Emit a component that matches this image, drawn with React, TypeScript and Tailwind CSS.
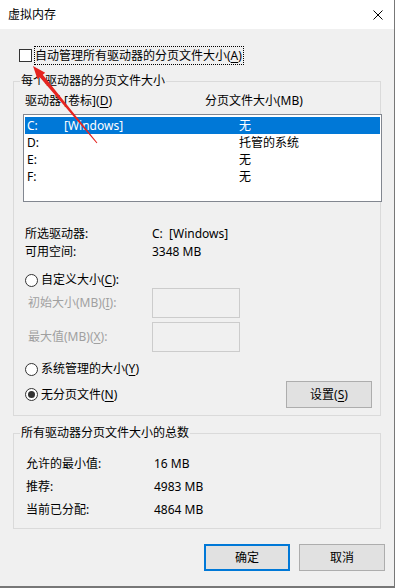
import React from 'react'

function Key({ k }: { k: string }) {
  return <span className="underline decoration-1 underline-offset-[2px]">{k}</span>
}

function Radio({ checked }: { checked?: boolean }) {
  return (
    <span className="flex h-[13px] w-[13px] shrink-0 items-center justify-center rounded-full border border-[#333333] bg-white">
      {checked && <span className="h-[7px] w-[7px] rounded-full bg-[#333333]" />}
    </span>
  )
}

const drives = [
  { id: 'C:', label: '[Windows]', size: '无', selected: true },
  { id: 'D:', label: '', size: '托管的系统', selected: false },
  { id: 'E:', label: '', size: '无', selected: false },
  { id: 'F:', label: '', size: '无', selected: false },
]

const totals = [
  { label: '允许的最小值:', value: '16 MB' },
  { label: '推荐:', value: '4983 MB' },
  { label: '当前已分配:', value: '4864 MB' },
]

export default function App() {
  return (
    <div className="relative flex h-[588px] w-[395px] flex-col border-r border-b-2 border-[#777777] bg-[#f0f0f0] font-['Noto_Sans','Noto_Sans_CJK_SC',sans-serif] text-[12px] leading-[16px] text-black">
      {/* title bar */}
      <div className="flex h-[29px] shrink-0 items-center justify-between bg-white pl-[8px] pr-[11px]">
        <span>虚拟内存</span>
        <svg width="10" height="10" viewBox="0 0 10 10">
          <path d="M0.5 0.5 L9.5 9.5 M9.5 0.5 L0.5 9.5" stroke="#000" strokeWidth="1" />
        </svg>
      </div>

      <div className="flex flex-1 flex-col px-[13px]">
        <div className="ml-[6px] mt-[17px] flex h-[19px] items-center">
          <span className="h-[13px] w-[13px] border border-[#333333] bg-white" />
          <span className="ml-[2px] flex h-[19px] items-center border border-dotted border-black pr-[1px]">
            自动管理所有驱动器的分页文件大小(<Key k="A" />)
          </span>
        </div>

        <fieldset className="mt-[8px] min-w-0 border border-[#dadada] pb-[7px]">
          <legend className="ml-[6px] px-[1px]">每个驱动器的分页文件大小</legend>
          <div className="flex flex-col pl-[9px]">
            <div className="mt-[4px] flex h-[16px] pl-[2px]">
              <span className="w-[180px]">
                驱动器 [卷标](<Key k="D" />)
              </span>
              <span>分页文件大小(MB)</span>
            </div>

            <div className="mt-[5px] h-[88px] w-[359px] border border-[#828790] bg-white px-[1px] pt-[2px]">
              {drives.map((d) => (
                <div
                  key={d.id}
                  className={
                    d.selected
                      ? 'flex h-[17px] items-center bg-[#0078d7] pl-[2px] text-white'
                      : 'flex h-[17px] items-center pl-[2px]'
                  }
                >
                  <span className="w-[37px]">{d.id}</span>
                  <span className="w-[175px]">{d.label}</span>
                  <span>{d.size}</span>
                </div>
              ))}
            </div>

            <div className="mt-[23px] flex h-[18px] items-center pl-[2px]">
              <span className="w-[127px]">所选驱动器:</span>
              <span className="whitespace-pre">C:  [Windows]</span>
            </div>
            <div className="flex h-[18px] items-center pl-[2px]">
              <span className="w-[127px]">可用空间:</span>
              <span>3348 MB</span>
            </div>

            <div className="mt-[11px] flex h-[16px] items-center pl-[2px]">
              <Radio />
              <span className="ml-[3px]">
                自定义大小(<Key k="C" />):
              </span>
            </div>
            <div className="flex h-[30px] items-center text-[#a0a0a0]">
              <span className="w-[129px] pl-[5px]">
                初始大小(MB)(<Key k="I" />):
              </span>
              <span className="h-[30px] w-[88px] border border-[#cccccc] bg-[#f0f0f0]" />
            </div>
            <div className="mt-[4px] flex h-[30px] items-center text-[#a0a0a0]">
              <span className="w-[129px] pl-[5px]">
                最大值(MB)(<Key k="X" />):
              </span>
              <span className="h-[30px] w-[88px] border border-[#cccccc] bg-[#f0f0f0]" />
            </div>

            <div className="mt-[9px] flex h-[16px] items-center pl-[2px]">
              <Radio />
              <span className="ml-[3px]">
                系统管理的大小(<Key k="Y" />)
              </span>
            </div>
            <div className="mt-[4px] flex h-[27px] items-center justify-between pl-[2px]">
              <div className="flex items-center">
                <Radio checked />
                <span className="ml-[3px]">
                  无分页文件(<Key k="N" />)
                </span>
              </div>
              <button className="mr-[8px] flex h-[27px] w-[86px] items-center justify-center border border-[#adadad] bg-[#e1e1e1]">
                设置(<Key k="S" />)
              </button>
            </div>
          </div>
        </fieldset>

        <fieldset className="mt-[9px] min-w-0 border border-[#dadada] pb-[7px]">
          <legend className="ml-[6px] px-[1px]">所有驱动器分页文件大小的总数</legend>
          <div className="mt-[11px] flex flex-col pl-[12px]">
            {totals.map((t) => (
              <div key={t.label} className="flex h-[23px] items-center">
                <span className="w-[128px]">{t.label}</span>
                <span>{t.value}</span>
              </div>
            ))}
          </div>
        </fieldset>

        <div className="-mr-[4px] mt-[15px] flex justify-end gap-[9px]">
          <button className="flex h-[27px] w-[86px] items-center justify-center border-2 border-[#0078d7] bg-[#e1e1e1]">
            确定
          </button>
          <button className="flex h-[27px] w-[86px] items-center justify-center border border-[#adadad] bg-[#e1e1e1]">
            取消
          </button>
        </div>
      </div>

      {/* red annotation arrow */}
      <svg className="pointer-events-none absolute left-0 top-0" width="395" height="588">
        <polygon
          points="33,66 45.2,72.8 42.8,74.7 97.4,142.7 96.6,143.3 39.8,77.3 37.5,79.2"
          fill="#e52420"
        />
      </svg>
    </div>
  )
}
